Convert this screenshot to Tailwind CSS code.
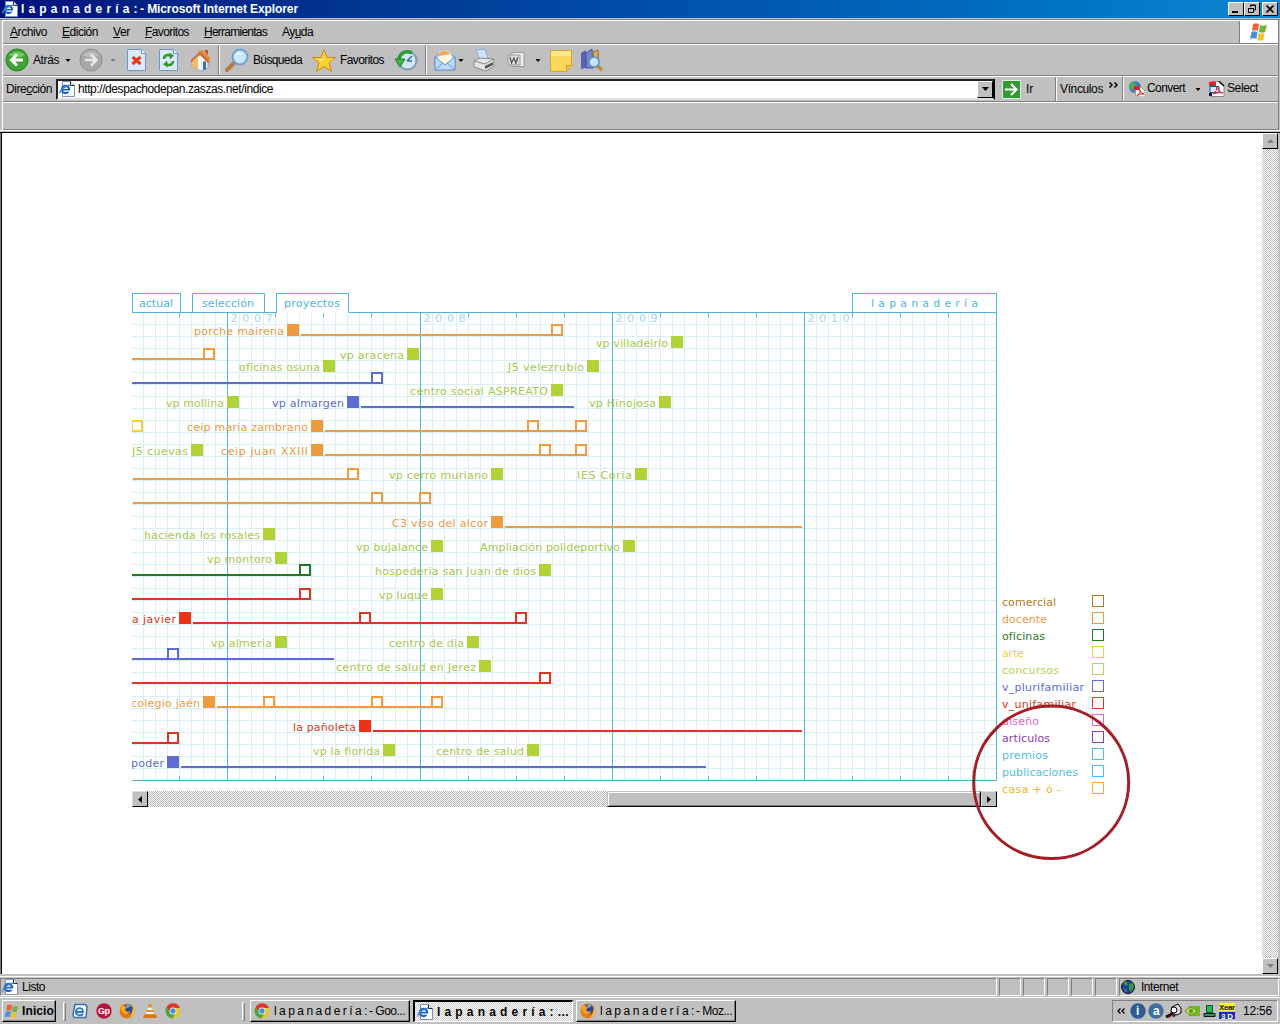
<!DOCTYPE html>
<html lang="es">
<head>
<meta charset="utf-8">
<title>lapanadería: - Microsoft Internet Explorer</title>
<script src="https://cdn.jsdelivr.net/npm/@tailwindcss/browser@4"></script>
</head>
<body class="w-[1280px] h-[1024px] overflow-hidden bg-[#c0c0c0] font-['Liberation_Sans',sans-serif] text-[12px] leading-[14px] text-black flex flex-col whitespace-nowrap">
<svg class="hidden">
  <symbol id="ie" viewBox="0 0 16 16"><path d="M3.500.5h8l4 4v11h-12z" fill="#fff" stroke="#7f93ae"/><path d="M11.500.5v4h4" fill="#dde" stroke="#223"/><circle cx="6.500" cy="8.500" r="3.600" fill="none" stroke="#1d5fc4" stroke-width="2.200"/><path d="M3.500 8.700h7" stroke="#1d5fc4" stroke-width="1.600"/><path d="M8.300 10.200h3" stroke="#fff" stroke-width="1.300"/><path d="M.9 12.500C0 9 9 3 12.300 4.600" fill="none" stroke="#3c8be0" stroke-width="1.300"/></symbol>
  <symbol id="chrome" viewBox="0 0 16 16"><circle cx="8" cy="8" r="7.500" fill="#e8c52c"/><path d="M1.500 4.200A7.500 7.500 0 0 1 15 5H8L5 9.500z" fill="#d9382c"/><path d="M1.500 4.200A7.500 7.500 0 0 0 7.500 15.500l3-5.500-5-.5z" fill="#4aa642"/><circle cx="8" cy="8" r="3.500" fill="#fff"/><circle cx="8" cy="8" r="2.700" fill="#4b8fd8"/></symbol>
  <symbol id="fox" viewBox="0 0 16 16"><circle cx="8" cy="8" r="7.500" fill="#e57a17"/><circle cx="8.500" cy="6.500" r="5" fill="#29489a"/><path d="M7 2c2-1 4 0 5 1-2 0-2 2-4 2z" fill="#6db0e8"/><path d="M1 4c1-2 1-2 2-3 0 2 2 2 3 2l2 2c-2 0-2 2-1 3s3 1 4 0c0 4-6 4-8 1z" fill="#f7a21d"/><path d="M14 4c2 4 1 9-4 11 3-3 4-6 4-11z" fill="#fccf3a"/></symbol>
  <symbol id="flag" viewBox="0 0 20 18"><path d="M4 1c2-1 4-1 6 0L9 8C7 7 5 7 3 8z" fill="#e8623a"/><path d="M11 2c2 1 4 1 7 0l-2 7c-2 1-4 1-6 0z" fill="#6fb43c"/><path d="M2.500 9c2-1 4-1 6 0l-1 7c-2-1-4-1-6.500 0z" fill="#4b8fe0"/><path d="M9.500 10c2 1 4 1 6 0l-1 7c-2 1-4 1-6 0z" fill="#f5c02c"/></symbol>
  <symbol id="down" viewBox="0 0 7 4"><path d="M0 0h7L3.500 4z" fill="currentColor"/></symbol>
</svg>

<!-- Title bar -->
<header class="h-[18px] shrink-0 flex items-center bg-linear-to-r from-[#000f7b] to-[#1086d2] text-white font-bold">
  <svg class="w-4 h-4 ml-[2px]"><use href="#ie"/></svg>
  <span class="ml-[3px] w-[119px]" data-w="117">l a p a n a d e r í a :</span>
  <span data-w="158">- Microsoft Internet Explorer</span>
  <div class="ml-auto mr-[2px] flex">
    <div class="w-4 h-[14px] bg-[#c0c0c0] border border-t-white border-l-white border-r-black border-b-black flex items-end pl-[3px] pb-[2px]"><i class="w-[6px] h-[2px] bg-black"></i></div>
    <div class="w-4 h-[14px] bg-[#c0c0c0] border border-t-white border-l-white border-r-black border-b-black"><svg class="w-[14px] h-3" fill="none" stroke="#000"><path d="M5.500 4V2h5v5H9M5 2.500h6M3.500 5v4.500h5V5M3 5.500h6"/></svg></div>
    <div class="ml-[2px] w-4 h-[14px] bg-[#c0c0c0] border border-t-white border-l-white border-r-black border-b-black"><svg class="w-[14px] h-3" fill="none" stroke="#000" stroke-width="1.600"><path d="M3.500 2.500l7 7M10.500 2.500l-7 7"/></svg></div>
  </div>
</header>
<div class="h-[2px] shrink-0 border-b border-[#808080]"></div>

<!-- Menu and tool bars -->
<div class="ml-[2px] mr-[1px] h-[110px] shrink-0 border-l border-l-white border-r border-r-[#808080] flex flex-col">
  <nav class="h-[24px] border-t border-white border-b border-b-[#808080] flex items-center pl-[7px]">
    <span class="w-[52px]" data-w="37"><u>A</u>rchivo</span><span class="w-[51px]" data-w="36"><u>E</u>dición</span><span class="w-8" data-w="17"><u>V</u>er</span><span class="w-[59px]" data-w="44"><u>F</u>avoritos</span><span class="w-[78px]" data-w="63"><u>H</u>erramientas</span><span data-w="31">Ay<u>u</u>da</span>
    <div class="ml-auto w-[39px] h-[22px] bg-white border-l border-[#808080] flex items-center justify-center"><svg class="w-5 h-[18px]"><use href="#flag"/></svg></div>
  </nav>
  <div class="h-[32px] border-t border-white border-b border-b-[#808080] flex items-center">
    <svg class="ml-[2px] w-6 h-6 shrink-0" viewBox="0 0 24 24"><circle cx="12" cy="12" r="11" fill="#3ea532" stroke="#277d22"/><path d="M4 7a10 8 0 0 1 16 0q-8 5-16 0" fill="#75c765"/><path d="M18 12H8M12 6.500L6.500 12l5.500 5.500" fill="none" stroke="#fff" stroke-width="3"/></svg>
    <span class="ml-[4px] w-[26px]" data-w="26">Atrás</span>
    <svg class="ml-[6px] w-[6px] h-[3px]" viewBox="0 0 7 4"><use href="#down"/></svg>
    <svg class="ml-[8px] w-6 h-6" viewBox="0 0 24 24"><circle cx="12" cy="12" r="11" fill="#a9a9a9" stroke="#8e8e8e"/><path d="M4 7a10 8 0 0 1 16 0q-8 5-16 0" fill="#bdbdbd"/><path d="M6 12h10M12 6.500l5.500 5.500-5.500 5.500" fill="none" stroke="#e8e8e8" stroke-width="2.500"/></svg>
    <svg class="ml-[7px] w-[6px] h-[3px] text-[#808080]" viewBox="0 0 7 4"><use href="#down"/></svg>
    <svg class="ml-[11px] w-[19px] h-[22px]" viewBox="0 0 19 22"><path d="M.5.5h14l4 4v17H.5z" fill="#dbe9fb" stroke="#6b95d0"/><path d="M14.500.5v4h4" fill="#fff" stroke="#6b95d0"/><path d="M5.500 8l8 7M13.500 8l-8 7" stroke="#e23a1d" stroke-width="3"/></svg>
    <svg class="ml-[13px] w-[19px] h-[22px]" viewBox="0 0 19 22"><path d="M.5.5h14l4 4v17H.5z" fill="#dbe9fb" stroke="#6b95d0"/><path d="M14.500.5v4h4" fill="#fff" stroke="#6b95d0"/><path d="M5 10c0-4 4-5 7-3M14 12c0 4-4 5-7 3" fill="none" stroke="#2a9a2a" stroke-width="2.500"/><path d="M10 3.500l5 3-4 4zM9 18.500l-5-3 4-4z" fill="#2a9a2a"/></svg>
    <svg class="ml-[10px] w-6 h-6" viewBox="0 0 24 24"><path d="M4 11l8-7 8 8v8l-7 3-9-4z" fill="#f0f4fb" stroke="#8aa4cc"/><path d="M10 3l5-1 8 9-3 2-8-8z" fill="#e88a3c"/><path d="M12 4L2 13l2 1 8-7 8 8 2-1z" fill="#c9682b"/><path d="M15 14l3-1v8l-3 1z" fill="#3b6fc4"/><path d="M5 12l5-4v14l-6-3z" fill="#f4b964"/><path d="M17 2h3v5l-3-3z" fill="#b8552a"/></svg>
    <div class="ml-[6px] w-[2px] h-7 border-l border-[#808080] border-r border-r-white"></div>
    <svg class="ml-[5px] w-6 h-6" viewBox="0 0 24 24"><path d="M2 22l7-7" stroke="#b87848" stroke-width="4" stroke-linecap="round"/><circle cx="15" cy="9" r="7.500" fill="#c9e6fc" stroke="#6d9ed4" stroke-width="2"/><path d="M10 8q3-5 8-2-5 0-8 2" fill="#fff"/></svg>
    <span class="ml-[4px] w-[49px]" data-w="49">Búsqueda</span>
    <svg class="ml-[9px] w-[26px] h-[25px]" viewBox="0 0 26 25"><path d="M13 1.500l3 8h8.500l-6.500 5.500 2.500 8.500-7.500-5-7.500 5 2.500-8.500-6.500-5.500H10z" fill="#fbd02f" stroke="#c98a17"/><path d="M13 4l-2 7H5l6 2z" fill="#fff0a0"/></svg>
    <span class="ml-[3px] w-[44px]" data-w="44">Favoritos</span>
    <svg class="ml-[10px] w-6 h-6" viewBox="0 0 24 24"><circle cx="13.500" cy="12.500" r="9" fill="#d5e8f6" stroke="#8098b4" stroke-width="2"/><path d="M13 13l5-5M13 13h5" stroke="#3a6a9a" stroke-width="1.500"/><path d="M18 5C12 2 6 5 5 11" fill="none" stroke="#2e9a35" stroke-width="3.500"/><path d="M1 11h10l-5 8z" fill="#45b548" stroke="#247a28"/></svg>
    <div class="ml-[7px] w-[2px] h-7 border-l border-[#808080] border-r border-r-white"></div>
    <svg class="ml-[7px] w-[22px] h-6" viewBox="0 0 22 24"><path d="M1 9l9-7 11 7v13H1z" fill="#a9c9f3" stroke="#6a94cc"/><path d="M4 11l1-7q6-4 12 1l1 6-7 5z" fill="#fff8e0"/><path d="M5 5q6-5 12 1l-12 2z" fill="#e8a85a"/><path d="M1 9l10 8 10-8v13H1z" fill="#bddafa" stroke="#6a94cc"/><path d="M1 22l8-7M21 22l-8-7" stroke="#6a94cc"/></svg>
    <svg class="ml-[2px] w-[6px] h-[3px]" viewBox="0 0 7 4"><use href="#down"/></svg>
    <svg class="ml-[9px] w-[22px] h-6" viewBox="0 0 22 24"><path d="M3 2l9-1 3 9-8 2z" fill="#cfe4fc" stroke="#86a8d6"/><path d="M1 13l6-3 14 1v7l-8 5-12-4z" fill="#e4e4e4" stroke="#8a8a8a"/><path d="M1 13l11 3 9-5" fill="none" stroke="#8a8a8a"/><path d="M12 18l8-4v3l-8 4z" fill="#555"/></svg>
    <svg class="ml-[12px] w-[18px] h-[18px]" viewBox="0 0 18 18"><path d="M5 1.500h12v14H5z" fill="#eee" stroke="#999"/><path d="M1 4h12v10H1z" fill="#ddd" stroke="#999"/><path d="M3 6l1.500 6L7 7l2 5 2-6" fill="none" stroke="#555" stroke-width="1.300"/></svg>
    <svg class="ml-[10px] w-[6px] h-[3px]" viewBox="0 0 7 4"><use href="#down"/></svg>
    <svg class="ml-[9px] w-[22px] h-[23px]" viewBox="0 0 22 23"><path d="M.5 1.500h21v15l-5 6H.5z" fill="#fbd85c" stroke="#d8a52c"/><path d="M1 2h20v5H1z" fill="#fde98c"/><path d="M16.500 22v-5.500h5" fill="#f5bf3c" stroke="#d8a52c"/></svg>
    <svg class="ml-[8px] w-6 h-6" viewBox="0 0 24 24"><path d="M1 5l5-3v18l-5 1z" fill="#5b62b8"/><path d="M6 5l6-4 1 19H6z" fill="#7c84cf" stroke="#4a4f9a"/><path d="M13 4l5-2 1 17h-6z" fill="#dcae58" stroke="#876c3c"/><path d="M16 17l6 5" stroke="#c08a3c" stroke-width="3"/><circle cx="14" cy="14" r="5" fill="#c5e6fb" stroke="#5d93c8" stroke-width="1.500"/></svg>
  </div>
  <div class="h-[26px] border-t border-white border-b border-b-[#808080] flex items-center">
    <span class="ml-[3px] w-[50px]" data-w="46">Dire<u>c</u>ción</span>
    <div class="w-[939px] h-[21px] bg-white border-2 border-t-[#222] border-l-[#222] border-r-black border-b-[#dfdfdf] flex items-center">
      <svg class="w-4 h-4 ml-px"><use href="#ie"/></svg>
      <span class="ml-[3px]" data-w="195">http://despachodepan.zaszas.net/indice</span>
      <div class="ml-auto w-4 h-[17px] bg-[#c0c0c0] border border-t-white border-l-white border-r-black border-b-black flex items-center justify-center"><svg class="w-[7px] h-[4px]"><use href="#down"/></svg></div>
    </div>
    <svg class="ml-[7px] w-[19px] h-[19px]" viewBox="0 0 19 19"><path d="M.5.5h18v18H.5z" fill="#319a35" stroke="#e0efe0"/><path d="M3 9.500h11M9 4l5.500 5.500L9 15" fill="none" stroke="#fff" stroke-width="2.200"/></svg>
    <span class="ml-[5px] w-[29px]" data-w="7">Ir</span>
    <div class="w-[2px] h-6 border-l border-[#808080] border-r border-r-white"></div>
    <span class="ml-[3px] w-[49px]" data-w="43">Vínculos</span>
    <svg class="w-[9px] h-[6px] mb-[9px]" fill="none" stroke="#000" stroke-width="1.500"><path d="M.5.500L3 3 .5 5.500M5.500.500L8 3 5.500 5.500"/></svg>
    <div class="ml-[4px] w-[2px] h-6 border-l border-[#808080] border-r border-r-white"></div>
    <svg class="ml-[5px] w-4 h-4" viewBox="0 0 16 16"><circle cx="6" cy="6" r="6" fill="#3a7fc4"/><path d="M1 3l4-3 2 4-4 5-3-3z" fill="#4cae4c"/><path d="M6 6h6l4 4v6H7z" fill="#fff" stroke="#999"/><path d="M5 5h6v4H5z" fill="#d42a20"/><path d="M8 15q4-4 3-6 0 4 4 4-4-1-7 2" fill="none" stroke="#d42a20"/></svg>
    <span class="ml-[2px] w-[38px] mb-[2px]" data-w="38">Convert</span>
    <svg class="ml-[10px] w-[6px] h-[3px]" viewBox="0 0 7 4"><use href="#down"/></svg>
    <svg class="ml-[8px] w-4 h-4" viewBox="0 0 16 16"><path d="M2 .5h9l4 4v11H2z" fill="#fff" stroke="#888"/><path d="M10 .5l5 4.500" stroke="#000" stroke-width="1.500"/><path d="M0 1h7v4H0z" fill="#d42a20"/><path d="M1 5.500h9v6H1z" fill="#dce8ff" stroke="#2244a8"/><path d="M4 13q4-3 4-7 1 5 6 6-5-1-10 1" fill="none" stroke="#d42a20"/><path d="M0 12h3v3H0z" fill="#114"/></svg>
    <span class="ml-[2px] mb-[2px]" data-w="31">Select</span>
  </div>
  <div class="h-[28px] border-t border-white border-b border-b-[#808080]"></div>
</div>
<div class="h-[3px] shrink-0 border-t border-white border-b border-b-black"></div>

<!-- Document -->
<main class="h-[841px] shrink-0 border-l border-l-[#808080] flex pr-[2px]">
  <div class="flex-1 bg-white border-l border-black relative">
    <svg id="board" class="absolute left-[130px] top-[152px] w-[1000px] h-[580px] font-['DejaVu_Sans',sans-serif] text-[11px]" viewBox="132 285 1000 580"></svg>
    <div class="absolute left-[130px] top-[658px] w-[865px] h-4 flex bg-[repeating-conic-gradient(#b4b4b4_0_25%,#fff_0_50%)] bg-size-[2px_2px]">
      <div class="w-4 h-4 bg-[#c0c0c0] border border-t-[#dfdfdf] border-l-[#dfdfdf] border-r-black border-b-black flex items-center justify-center"><svg class="w-[4px] h-[7px]"><path d="M4 0v7L0 3.500z"/></svg></div>
      <div class="ml-[459px] w-[374px] h-4 bg-[#c0c0c0] border border-t-[#c0c0c0] border-l-[#c0c0c0] border-r-black border-b-black shadow-[inset_1px_1px_0_#fff,inset_-1px_-1px_0_#808080]"></div>
      <div class="w-4 h-4 bg-[#c0c0c0] border border-t-[#dfdfdf] border-l-[#dfdfdf] border-r-black border-b-black flex items-center justify-center"><svg class="w-[4px] h-[7px]"><path d="M0 0v7l4-3.500z"/></svg></div>
    </div>
    <svg class="absolute left-[968px] top-[569px] w-[162px] h-[162px]" viewBox="970 702 162 162"><ellipse cx="1051.200" cy="782.300" rx="77.500" ry="76.300" fill="none" stroke="#a51d25" stroke-width="3"/></svg>
  </div>
  <div class="w-4 flex flex-col justify-between bg-[repeating-conic-gradient(#c0c0c0_0_25%,#fff_0_50%)] bg-size-[2px_2px]">
    <div class="h-4 bg-[#c0c0c0] border border-t-white border-l-white border-r-black border-b-black flex items-center justify-center text-[#808080]"><svg class="w-[7px] h-[4px] rotate-180"><use href="#down"/></svg></div>
    <div class="h-4 bg-[#c0c0c0] border border-t-white border-l-white border-r-black border-b-black flex items-center justify-center text-[#808080]"><svg class="w-[7px] h-[4px]"><use href="#down"/></svg></div>
  </div>
</main>

<!-- Status bar -->
<div class="h-[4px] shrink-0 border-b border-white mb-px -mt-px"></div>
<footer class="h-[18px] shrink-0 flex gap-[2px] pr-px">
  <div class="w-[997px] border border-t-[#808080] border-l-[#808080] border-r-white border-b-white flex items-center"><svg class="w-4 h-4 ml-[1px]"><use href="#ie"/></svg><span class="ml-[4px]" data-w="23">Listo</span></div>
  <div class="w-[22px] border border-t-[#808080] border-l-[#808080] border-r-white border-b-white"></div>
  <div class="w-[22px] border border-t-[#808080] border-l-[#808080] border-r-white border-b-white"></div>
  <div class="w-[22px] border border-t-[#808080] border-l-[#808080] border-r-white border-b-white"></div>
  <div class="w-[22px] border border-t-[#808080] border-l-[#808080] border-r-white border-b-white"></div>
  <div class="w-[22px] border border-t-[#808080] border-l-[#808080] border-r-white border-b-white"></div>
  <div class="flex-1 border border-t-[#808080] border-l-[#808080] border-r-white border-b-white flex items-center"><svg class="w-[14px] h-[14px] ml-[1px]" viewBox="0 0 14 14"><circle cx="7" cy="7" r="6.500" fill="#1d3fa8" stroke="#111"/><path d="M2 3l3-2 2 3-2 2zM8 4l4-1 1 4-3 5-2-3zM2 8l4 2v3z" fill="#3a9a3c"/></svg><span class="ml-[6px]" data-w="37">Internet</span></div>
</footer>

<!-- Taskbar -->
<div class="h-[28px] shrink-0 mt-px border-t border-white flex items-start pt-[2px]">
  <div class="ml-[2px] w-[54px] h-[22px] border border-t-white border-l-white border-r-black border-b-black shadow-[inset_-1px_-1px_0_#808080] flex items-center font-bold"><svg class="w-4 h-[15px] ml-[1px]" viewBox="0 0 20 18"><use href="#flag"/></svg><span class="ml-[2px]" data-w="32">Inicio</span></div>
  <div class="ml-[7px] w-[3px] h-[19px] mt-[2px] border border-t-white border-l-white border-[#808080]"></div>
  <svg class="ml-[6px] w-4 h-4 mt-[3px]" viewBox="0 0 16 16"><path d="M3 1.500h10l2 2-1 11H2l-1-3z" fill="#fff" stroke="#3170b0" stroke-width="1.500"/><path d="M4 9h7c0-5-6-5-7-1-1 5 5 5 7 3" fill="none" stroke="#2b78c4" stroke-width="1.800"/></svg>
  <svg class="ml-[8px] w-4 h-4 mt-[3px] text-[9px] font-bold" viewBox="0 0 16 16"><circle cx="8" cy="8" r="7.700" fill="#b3173c"/><text x="2" y="10.500" fill="#fff" textLength="12">Gp</text></svg>
  <svg class="ml-[7px] w-4 h-4 mt-[3px]"><use href="#fox"/></svg>
  <svg class="ml-[7px] w-4 h-4 mt-[3px]" viewBox="0 0 16 16"><path d="M2 12l2-1h8l2 1 1 3H1z" fill="#d7741c"/><path d="M7 1h2l4 11H3z" fill="#f08a24"/><path d="M6 4.500h4l1 2.500H5zM4.500 9h7l.7 2H3.700z" fill="#f3f3f3"/></svg>
  <svg class="ml-[7px] w-4 h-4 mt-[3px]"><use href="#chrome"/></svg>
  <div class="ml-[61px] w-[3px] h-[19px] mt-[2px] border border-t-white border-l-white border-[#808080]"></div>
  <div class="ml-[5px] w-[160px] h-[22px] border border-t-white border-l-white border-r-black border-b-black shadow-[inset_-1px_-1px_0_#808080] flex items-center"><svg class="w-4 h-4 ml-[3px]"><use href="#chrome"/></svg><span class="ml-[4px] flex"><span class="w-[95px]" data-w="93">l a p a n a d e r í a :</span><span data-w="36">- Goo...</span></span></div>
  <div class="ml-[3px] w-[160px] h-[22px] border-t-2 border-l-2 border-r border-b border-t-black border-l-black border-r-white border-b-white bg-[repeating-conic-gradient(#c8c8c8_0_25%,#fff_0_50%)] bg-size-[2px_2px] flex items-center font-bold pt-px"><svg class="w-4 h-4 ml-[2px]"><use href="#ie"/></svg><span class="ml-[4px]" data-w="132">l a p a n a d e r í a : ...</span></div>
  <div class="ml-[3px] w-[160px] h-[22px] border border-t-white border-l-white border-r-black border-b-black shadow-[inset_-1px_-1px_0_#808080] flex items-center"><svg class="w-4 h-4 ml-[3px]"><use href="#fox"/></svg><span class="ml-[4px] flex"><span class="w-[96px]" data-w="94">l a p a n a d e r í a :</span><span data-w="36">- Moz...</span></span></div>
  <div class="ml-auto mr-[2px] w-[166px] h-[22px] border border-t-[#808080] border-l-[#808080] border-r-white border-b-white flex items-center">
    <svg class="ml-[4px] w-[8px] h-[6px]" fill="none" stroke="#000" stroke-width="1.300"><path d="M3.500.500L1 3l2.500 2.500M7.500.500L5 3l2.500 2.500"/></svg>
    <svg class="ml-[5px] w-4 h-4 text-[12px] font-bold" viewBox="0 0 16 16"><circle cx="8" cy="8" r="7.700" fill="#2d5b92"/><text x="6" y="12" fill="#fff">i</text></svg>
    <svg class="ml-[2px] w-4 h-4 text-[12px] font-bold" viewBox="0 0 16 16"><circle cx="8" cy="8" r="7.700" fill="#3f6fa3"/><text x="5" y="12" fill="#fff">a</text></svg>
    <svg class="ml-[1px] w-[18px] h-4" viewBox="0 0 18 16"><path d="M7 4l6-3 3 4v5l-4 2-6-2z" fill="#ddd" stroke="#000"/><circle cx="9" cy="7" r="3" fill="#fff" stroke="#000"/><path d="M1 14l6-3 3 2" fill="none" stroke="#111" stroke-width="3"/><path d="M3 15l7-4" stroke="#b33" stroke-width="1"/></svg>
    <svg class="ml-[1px] w-4 h-[12px]" viewBox="0 0 16 12"><path d="M5 1h11v10H5z" fill="#78b51e"/><path d="M1 6q5-7 12 0-6 7-12 0z" fill="#b4dc6a" stroke="#5a9414"/><circle cx="7" cy="6" r="2" fill="#5a9414"/></svg>
    <svg class="ml-[3px] w-[13px] h-[12px]" viewBox="0 0 13 12"><path d="M3.500.500h6v7h-6z" fill="#1fc04a" stroke="#144"/><path d="M1 8.500h11v3H1z" fill="#2a9a5a" stroke="#111"/></svg>
    <svg class="ml-[3px] w-4 h-4 text-[8px] font-bold" viewBox="0 0 16 16"><path d="M0 0h16v8H0z" fill="#f8ee3c"/><path d="M0 9h16v7H0z" fill="#1b2bb8"/><text x="0" y="7" textLength="16" fill="#111">Xear</text><text x="2" y="15.500" textLength="12" fill="#fff">3D</text></svg>
    <span class="ml-[8px]" data-w="29">12:56</span>
  </div>
</div>

<script>
// Set tracking so each interface label takes its bitmap-font width.
var ctx = document.createElement('canvas').getContext('2d');
document.querySelectorAll('[data-w]').forEach(function (el) {
  ctx.font = (el.closest('.font-bold') ? 'bold ' : '') + '12px "Liberation Sans"';
  var t = el.textContent;
  el.style.letterSpacing = (el.dataset.w - ctx.measureText(t).width) / t.length + 'px';
});

var O = '#ee9a3e', G = '#b2d337', B = '#5d6bd3', R = '#dc3724', K = '#1f7a24', C = '#4fb5da';
var s = '';
function line(x1, y1, x2, y2, c, w) { s += '<path d="M' + x1 + ' ' + y1 + 'L' + x2 + ' ' + y2 + '" stroke="' + c + '" stroke-width="' + (w || 1) + '"/>'; }
function text(t, x, y, w, c) { s += '<text x="' + x + '" y="' + y + '" textLength="' + w + '" fill="' + c + '">' + t + '</text>'; }
function open(x, y, c) { s += '<rect x="' + (x + 1) + '" y="' + (y + 1) + '" width="10" height="10" fill="none" stroke="' + c + '" stroke-width="2"/>'; }

var x, y, i;
for (x = 143.5; x < 410; x += 12) line(x, 313, x, 780, '#d5f1f3');
for (x = 432.5; x < 996; x += 12) line(x, 313, x, 780, '#d5f1f3');
for (y = 324.5; y < 780; y += 12) line(132, y, 996, y, '#d8f0f6');
for (x = 179.5; x < 410; x += 48) { line(x, 313, x, 317, C); line(x, 776, x, 780, C); }
for (x = 468.5; x < 996; x += 48) { line(x, 313, x, 317, C); line(x, 776, x, 780, C); }
[227.5, 420.5, 612.5, 804.5].forEach(function (v, n) {
  line(v, 312, v, 780, C);
  [2, 0, [0, 0, 0, 1][n], [7, 8, 9, 0][n]].forEach(function (d, k) { text(d, v + 3 + k * 11.7, 322, 7, '#a6d5ec'); });
});
s += '<path d="M132 312.500H276.500V293.500H348.500V312.500H996.500V780.500H132M132.500 312V293.500H180.500V312M192.500 312V293.500H264.500V312M852.500 312V293.500H996.500V312" fill="none" stroke="' + C + '"/>';
text('actual', 139, 307, 34, C); text('selección', 202, 307, 52, C); text('proyectos', 284, 307, 56, C);
text('l a p a n a d e r í a', 871, 307, 107, C);

[[301,563,335,O],[132,215,359,O],[132,383,383,B],[361,574,407,B],[325,587,431,O],[325,587,455,O],[133,359,479,O],[133,431,503,O],[505,802,527,O],[132,311,575,K],[132,311,599,R],[193,527,623,R],[132,334,659,B],[132,551,683,R],[217,443,707,O],[373,802,731,R],[132,179,743,R],[181,706,767,B]]
  .forEach(function (l) { line(l[0], l[2], l[1], l[2], l[3], 2); });
[[551,324,O],[203,348,O],[371,372,B],[131,420,'#ecd42a'],[527,420,O],[575,420,O],[539,444,O],[575,444,O],[347,468,O],[371,492,O],[419,492,O],[299,564,K],[299,588,R],[359,612,R],[515,612,R],[167,648,B],[539,672,R],[263,696,O],[371,696,O],[431,696,O],[167,732,R]]
  .forEach(function (b) { open(b[0], b[1], b[2]); });
[['porche mairena',194,287,324,O],['vp villadelrio',596,671,336,G],['vp aracena',340,407,348,G],['oficinas osuna',239,323,360,G],['J5 velezrubio',508,587,360,G],['centro social ASPREATO',410,551,384,G],['vp mollina',166,227,396,G],['vp almargen',272,347,396,B],['vp Hinojosa',589,659,396,G],['ceip maria zambrano',187,311,420,O],['J5 cuevas',132,191,444,G],['ceip juan XXIII',221,311,444,O],['vp cerro muriano',389,491,468,G],['IES Coria',577,635,468,G],['C3 viso del alcor',392,491,516,O],['hacienda los rosales',144,263,528,G],['vp bujalance',356,431,540,G],['Ampliación polideportivo',480,623,540,G],['vp montoro',207,275,552,G],['hospederia san juan de dios',375,539,564,G],['vp luque',379,431,588,G],['a javier',132,179,612,R],['vp almeria',211,275,636,G],['centro de dia',389,467,636,G],['centro de salud en Jerez',336,479,660,G],['colegio jaén',131,203,696,O],['la pañoleta',293,359,720,R],['vp la florida',313,383,744,G],['centro de salud',436,527,744,G],['poder',131,167,756,B]]
  .forEach(function (p) {
    text(p[0], p[1], p[3] + 11, p[2] - p[1] - 3, p[4] === G ? '#a5c94c' : p[4]);
    s += '<rect x="' + p[2] + '" y="' + p[3] + '" width="12" height="12" fill="' + (p[4] === R ? '#ee3219' : p[4]) + '"/>';
  });
[['comercial',54,'#ad7a1c'],['docente',45,O],['oficinas',43,K],['arte',22,'#ecd42a'],['concursos',57,'#b0d455'],['v_plurifamiliar',82,B],['v_unifamiliar',74,R],['diseño',37,'#e563c9'],['articulos',48,'#8c3bb5'],['premios',46,'#50bde3'],['publicaciones',76,'#50bde3'],['casa + ó -',59,'#f0b42c']]
  .forEach(function (g, n) {
    text(g[0], 1002, 606 + n * 17, g[1], g[2]);
    s += '<rect x="1092.5" y="' + (595.5 + n * 17) + '" width="11" height="11" fill="none" stroke="' + g[2] + '"/>';
  });
document.getElementById('board').innerHTML = s;
</script>
</body>
</html>
